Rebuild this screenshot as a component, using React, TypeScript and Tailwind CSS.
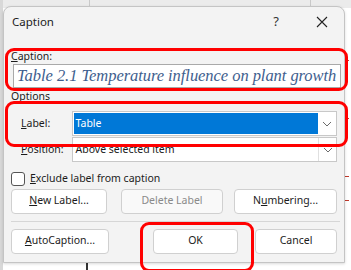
import React from 'react';

const font = { fontFamily: '"Noto Sans", "Open Sans", sans-serif' };

const Btn: React.FC<{ w: string; disabled?: boolean; children: React.ReactNode }> = ({ w, disabled, children }) => (
  <div
    className={`${w} h-[25px] flex items-center justify-center rounded-[4px] border border-[#d0d0d0] text-[10.5px] ${
      disabled ? 'text-[#8a8a8a] bg-[#f9f9f9]' : 'text-[#1b1b1b] bg-white'
    }`}
  >
    {children}
  </div>
);

const Chevron = () => (
  <svg width="10" height="6" viewBox="0 0 10 6" className="text-[#6b6b6b]">
    <path d="M1 1 L5 5 L9 1" fill="none" stroke="currentColor" strokeWidth="1" />
  </svg>
);

const App: React.FC = () => {
  return (
    <div className="relative w-[351px] h-[270px] overflow-hidden bg-white" style={font}>
      {/* page behind the dialog */}
      <div className="absolute top-0 left-0 w-full h-[8px] bg-[#ebebeb]">
        <div className="absolute left-[89px] top-0 w-px h-full bg-[#c9c9c9]" />
        <div className="absolute left-[310px] top-0 w-px h-full bg-[#c9c9c9]" />
      </div>
      <div className="absolute left-0 top-0 w-[3px] h-full bg-[#d8d8d8]" />
      <div className="absolute right-[2px] top-[60px] w-[4px] h-px bg-[#c0392b]" />
      <div className="absolute right-[2px] top-[118px] w-[4px] h-px bg-[#c0392b]" />
      <div className="absolute right-[2px] top-[176px] w-[4px] h-px bg-[#c0392b]" />
      <div className="absolute right-[2px] top-[200px] w-[4px] h-px bg-[#c0392b]" />
      <div className="absolute left-[86px] top-[262px] w-[2px] h-[8px] bg-[#333]" />

      {/* dialog */}
      <div className="relative ml-[3px] mr-[6px] mt-[6px] h-[257px] rounded-t-[8px] bg-[#f3f3f3] border border-[#c4c4c4] shadow-[0_1px_3px_rgba(0,0,0,0.15)] flex flex-col">
        <div className="h-[30px] flex items-center pl-[8px] pr-[16px]">
          <span className="text-[11.5px] text-[#1b1b1b]">Caption</span>
          <span className="ml-auto mr-[37px] text-[13px] text-[#333]">?</span>
          <svg width="12" height="12" viewBox="0 0 12 12">
            <path d="M1 1 L11 11 M11 1 L1 11" stroke="#222" strokeWidth="1.1" />
          </svg>
        </div>

        <div className="px-[7px] pt-[14px] flex flex-col">
          <span className="text-[10.5px] leading-[11px] text-[#1b1b1b]">
            <span className="underline">C</span>aption:
          </span>
          <div className="mt-[2px] ml-[2px] w-[328px] h-[24px] bg-white border border-[#a9a9a9] flex items-center pl-[3px] overflow-hidden">
            <span
              className="italic text-[16.5px] tracking-[-0.05px] text-[#3e5e8e] whitespace-nowrap"
              style={{ fontFamily: '"Liberation Serif", serif' }}
            >
              Table 2.1 Temperature influence on plant growth
            </span>
          </div>

          <span className="mt-[3px] text-[10.5px] leading-[11px] text-[#1b1b1b]">Options</span>

          <div className="mt-[9px] flex items-center">
            <span className="w-[61px] pl-[10px] text-[10.5px] text-[#1b1b1b]">
              <span className="underline">L</span>abel:
            </span>
            <div className="w-[268px] h-[25px] bg-white border border-[#c8c8c8] flex items-center">
              <div className="flex-1 h-[21px] ml-px bg-[#0078d7] text-white text-[10.5px] flex items-center pl-[2px]">Table</div>
              <div className="w-[18px] flex justify-center">
                <Chevron />
              </div>
            </div>
          </div>

          <div className="mt-[1px] flex items-center">
            <span className="w-[61px] pl-[10px] text-[10.5px] text-[#1b1b1b]">
              <span className="underline">P</span>osition:
            </span>
            <div className="w-[268px] h-[25px] bg-white border border-[#c8c8c8] flex items-center">
              <div className="flex-1 text-[10.5px] text-[#1b1b1b] pl-[3px]">Above selected item</div>
              <div className="w-[18px] flex justify-center border-l border-[#e0e0e0] h-full items-center">
                <Chevron />
              </div>
            </div>
          </div>

          <div className="mt-[9px] flex items-center">
            <div className="w-[14px] h-[14px] rounded-[3px] border border-[#555] bg-white" />
            <span className="ml-[5px] text-[10.5px] text-[#1b1b1b]">
              <span className="underline">E</span>xclude label from caption
            </span>
          </div>

          <div className="mt-[2px] flex items-center">
            <Btn w="w-[99px]">
              <span>
                <span className="underline">N</span>ew Label...
              </span>
            </Btn>
            <div className="ml-[14px]">
              <Btn w="w-[102px]" disabled>
                Delete Label
              </Btn>
            </div>
            <div className="ml-[11px]">
              <Btn w="w-[103px]">
                <span>
                  N<span className="underline">u</span>mbering...
                </span>
              </Btn>
            </div>
          </div>

          <div className="mt-[7px] h-px w-[329px] bg-[#d6d6d6]" />

          <div className="mt-[7px] flex items-center">
            <Btn w="w-[101px]">
              <span>
                <span className="underline">A</span>utoCaption...
              </span>
            </Btn>
            <div className="ml-[44px]">
              <Btn w="w-[85px]">OK</Btn>
            </div>
            <div className="ml-[17px]">
              <Btn w="w-[82px]">Cancel</Btn>
            </div>
          </div>
        </div>
      </div>

      {/* red annotation boxes */}
      <div className="absolute left-[5px] top-[48px] w-[343px] h-[43px] rounded-[9px] border-[3px] border-[#ff0000]" />
      <div className="absolute left-[5px] top-[101px] w-[343px] h-[46px] rounded-[9px] border-[3px] border-[#ff0000]" />
      <div className="absolute left-[140px] top-[222px] w-[114px] h-[50px] rounded-[9px] border-[3px] border-[#ff0000]" />
    </div>
  );
};

export default App;
